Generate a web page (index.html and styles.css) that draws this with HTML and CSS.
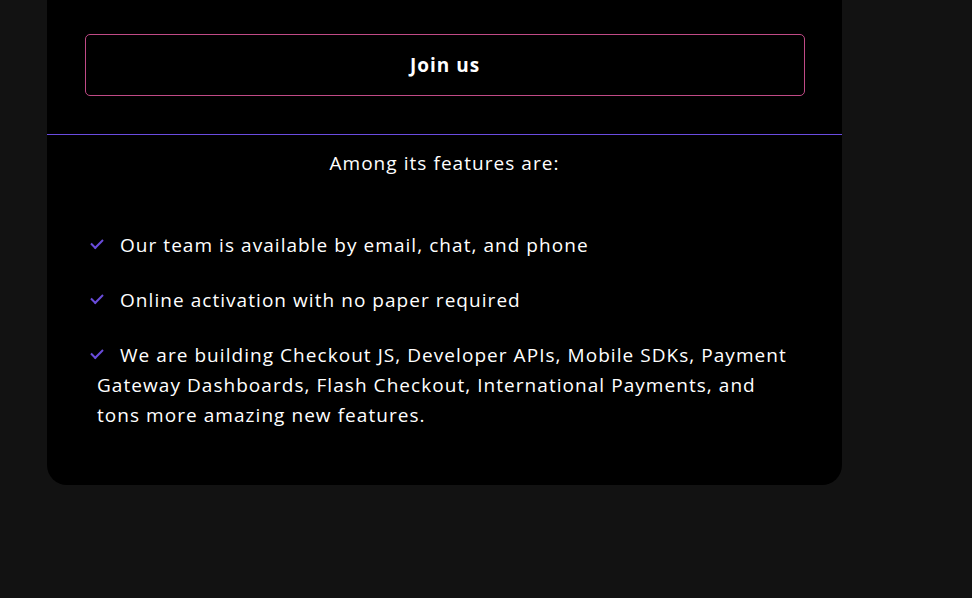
FILE: index.html
```html
<!DOCTYPE html>
<html lang="en">
<head>
<meta charset="utf-8">
<title>Join us</title>
<link rel="stylesheet" href="styles.css">
</head>
<body>
  <section class="card">
    <div class="cta">
      <button class="join">Join us</button>
    </div>
    <div class="features">
      <p class="intro">Among its features are:</p>
      <ul class="list">
        <li>Our team is available by email, chat, and phone</li>
        <li>Online activation with no paper required</li>
        <li>We are building Checkout JS, Developer APIs, Mobile SDKs, Payment Gateway Dashboards, Flash Checkout, International Payments, and tons more amazing new features.</li>
      </ul>
    </div>
  </section>
</body>
</html>
```
FILE: styles.css
```css
html, body {
  margin: 0;
  padding: 0;
  background: #121212;
  font-family: "Open Sans", "Liberation Sans", sans-serif;
  color: #fff;
}
.card {
  width: 795px;
  margin: -40px 0 0 47px;
  background: #000;
  border-radius: 20px;
  overflow: hidden;
}
.cta {
  padding: 74px 37px 38px 38px;
  border-bottom: 1px solid #6a4ce0;
}
.join {
  display: block;
  width: 100%;
  height: 62px;
  background: #000;
  border: 1px solid #c04a86;
  border-radius: 5px;
  color: #fff;
  font-family: inherit;
  font-weight: 700;
  font-size: 19px;
  letter-spacing: 1px;
  cursor: pointer;
}
.features {
  padding: 13px 50px 55px 50px;
  letter-spacing: 1.05px;
}
.intro {
  margin: 0;
  text-align: center;
  font-size: 19px;
  line-height: 30px;
}
.list {
  list-style: none;
  margin: 52px 0 0 0;
  padding: 0;
}
.list li {
  font-size: 19px;
  line-height: 30px;
  margin-bottom: 25px;
}
.list li:last-child { margin-bottom: 0; }
.list li::before {
  content: "";
  display: inline-block;
  width: 10px;
  height: 5px;
  border-left: 2px solid #6a4cdb;
  border-bottom: 2px solid #6a4cdb;
  transform: rotate(-45deg);
  margin-left: -6px;
  margin-right: 17px;
  vertical-align: 6px;
}
```
